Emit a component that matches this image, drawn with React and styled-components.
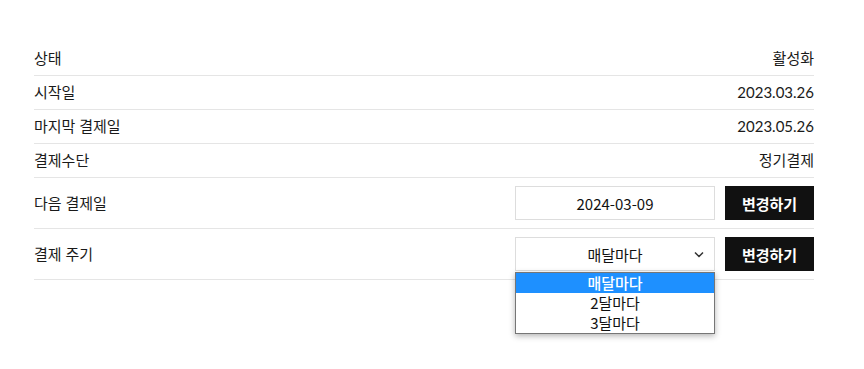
import styled, { createGlobalStyle } from 'styled-components'

const Global = createGlobalStyle`
body{margin:0;background:#fff;font-family:Lato,"Noto Sans CJK KR",sans-serif;color:#222;}
`

const Container = styled.div`
padding:42px 50px 90px 34px;
`
const Row = styled.div`
display:flex;
align-items:center;
justify-content:space-between;
padding:8px 0;
min-height:17px;
border-bottom:1px solid #e5e5e5;
font-size:15px;
line-height:17px;
`
const Label = styled.span`
font-size:15px;
color:#1a1a1a;
`
const Value = styled.span`
font-size:15px;
color:#1a1a1a;
`
const Controls = styled.div`
display:flex;
gap:10px;
align-items:center;
`
const Field = styled.div`
position:relative;
width:200px;
height:34px;
box-sizing:border-box;
border:1px solid #ddd;
background:#fff;
display:flex;
align-items:center;
justify-content:center;
font-family:"Noto Sans CJK KR",sans-serif;
font-size:15px;
color:#111;
`
const Chevron = styled.svg`
position:absolute;
right:10px;
top:13px;
`
const Button = styled.button`
width:89px;
height:34px;
border:none;
background:#111;
color:#fff;
font-family:"Noto Sans CJK KR",sans-serif;
font-weight:700;
font-size:15px;
`
const Menu = styled.div`
position:absolute;
left:-1px;
top:34px;
width:200px;
box-sizing:border-box;
border:1px solid #767676;
background:#fff;
box-shadow:0 2px 6px rgba(0,0,0,0.3);
z-index:2;
`
const Option = styled.div`
height:20px;
line-height:20px;
text-align:center;
font-size:15px;
font-weight:${p => p.$active ? 500 : 400};
background:${p => p.$active ? '#1e90ff' : '#fff'};
color:${p => p.$active ? '#fff' : '#111'};
`

const App = () => {
  return (
    <Container>
      <Global />
      <Row><Label>상태</Label><Value>활성화</Value></Row>
      <Row><Label>시작일</Label><Value>2023.03.26</Value></Row>
      <Row><Label>마지막 결제일</Label><Value>2023.05.26</Value></Row>
      <Row><Label>결제수단</Label><Value>정기결제</Value></Row>
      <Row>
        <Label>다음 결제일</Label>
        <Controls>
          <Field>2024-03-09</Field>
          <Button>변경하기</Button>
        </Controls>
      </Row>
      <Row>
        <Label>결제 주기</Label>
        <Controls>
          <Field>
            매달마다
            <Chevron width="10" height="7" viewBox="0 0 10 7">
              <path d="M1 1.5l4 4 4-4" fill="none" stroke="#333" strokeWidth="1.5" />
            </Chevron>
            <Menu>
              <Option $active>매달마다</Option>
              <Option>2달마다</Option>
              <Option>3달마다</Option>
            </Menu>
          </Field>
          <Button>변경하기</Button>
        </Controls>
      </Row>
    </Container>
  )
}

export default App
